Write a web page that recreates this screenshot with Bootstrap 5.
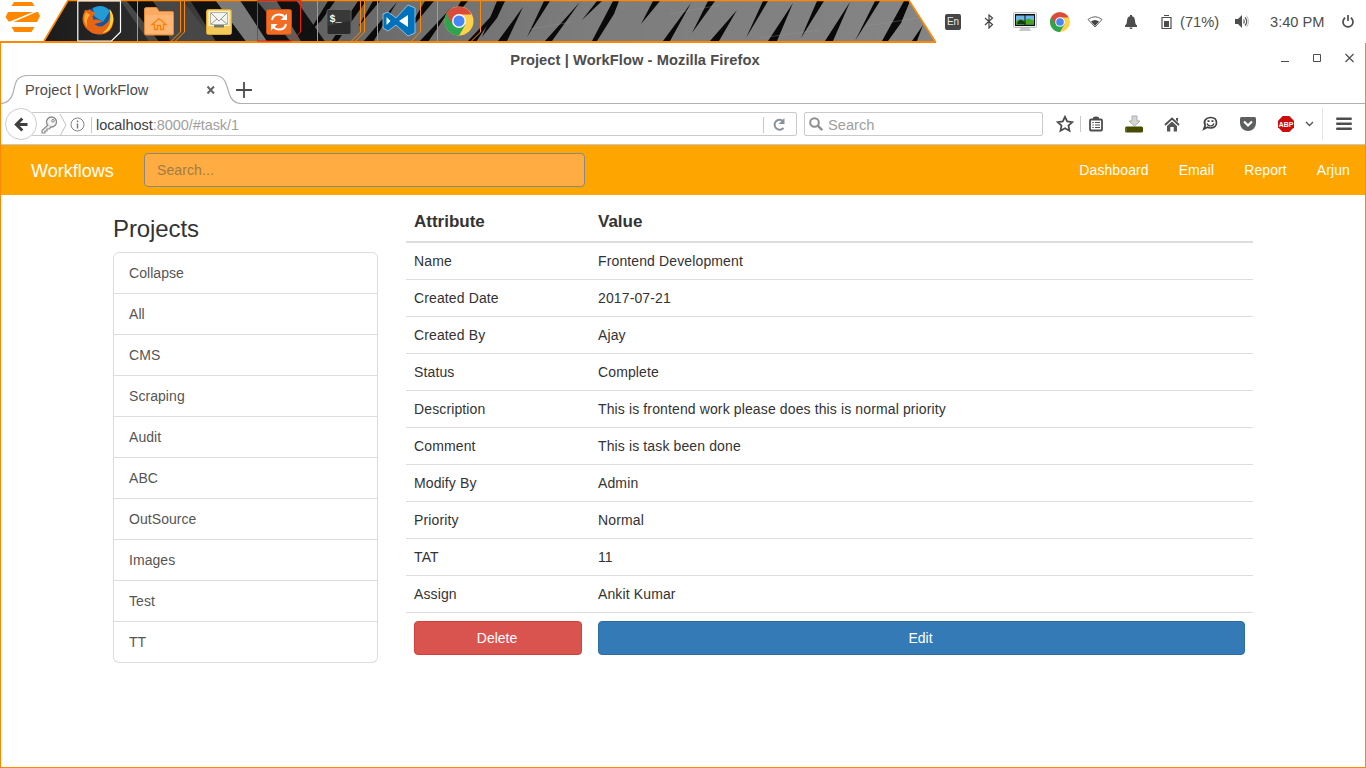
<!DOCTYPE html>
<html lang="en">
<head>
<meta charset="utf-8">
<meta name="viewport" content="width=device-width, initial-scale=1">
<title>Project | WorkFlow</title>
<link rel="stylesheet" href="https://cdn.jsdelivr.net/npm/bootstrap@5.3.0/dist/css/bootstrap.min.css">
<style>
html,body{height:768px;overflow:hidden}
body{font-family:"Liberation Sans",Arial,sans-serif;font-size:14px;line-height:20px;color:#333;background:#fff}
svg{display:block;flex:none}
/* desktop panel */
.panel{height:43px}
.panel-bg{position:absolute;left:0;top:0;z-index:-1}
.logo-box{width:77px}
.task-btn{width:60px;height:43px}
.tray{width:431px;height:43px;padding-right:4px;font-size:14.67px;color:#4d4d4d}
.tray-item{width:36px;display:flex;justify-content:center}
.tray-item.slim{width:34px}
.tray-batt{width:75px;padding-left:12px}
.tray-clock{width:74px;padding-left:10px}
.tray-power{width:28px;display:flex;justify-content:center}
.kbd-lang{width:16px;height:16px;background:#464646;color:#e8e8e8;font-size:10px;line-height:16px;border-radius:2px;text-align:center}
/* browser window */
.window-frame{height:725px;border:solid #ff8800;border-width:0 1px 1px}
.title-row{height:32px}
.title-text{width:1268px;font-size:14.67px;letter-spacing:.08px;color:#4d4d4d;padding-top:1px}
.tab-row{height:29px}
.tab-box{width:240px}
.tab-shape{position:absolute;left:0;top:0;z-index:-1}
.tab-title{font-size:14.67px;letter-spacing:.06px;color:#4c4c4c;padding-left:24px;width:203px}
.tab-rest{border-bottom:1px solid #aeb0b3}
.tool-row{height:41px;border-bottom:1px solid #c8c8c8;padding-left:4px}
.back-btn{width:32px;height:32px;border:1px solid #ccc;border-radius:50%;background:#fff;z-index:1;margin-right:-6px}
.field-box{height:24px;border:1px solid #cacaca;border-radius:2px;background:#fff;font-size:14.67px;color:#a0a0a0}
.url-box{width:766px;font-size:14.5px;letter-spacing:-.06px;padding:1px 0 0 8px}
.url-host{color:#404040}
.v-line{width:1px;height:16px;background:#c9c9c9;flex:none}
.find-box{width:239px;margin-left:7px;padding:1px 0 0 4px}
.tb-icon{width:38px;display:flex;justify-content:center;flex:none}
.tb-sm{width:30px}
/* page */
.app-nav{height:50px;background:#ffa500;padding:0 15px 0 30px}
.app-nav a{color:#fff;text-decoration:none}
.brand-link{font-size:18px;width:113px;padding-top:2px}
.app-search{width:441px;height:34px;border:1px solid #888;border-radius:4px;background:#ffac42;color:#8d6c43;font-size:14px;letter-spacing:.1px;padding:6px 12px}
.app-search::placeholder{color:#a37b45;opacity:1}
.app-search:focus{background:#ffac42}
.menu-links{gap:30px;letter-spacing:.1px}
.page-body{padding:0 0 0 112px}
.side-col{width:265px;margin-right:28px}
.side-title{font-size:24px;line-height:26px;letter-spacing:-.1px;margin:21px 0 10px;color:#333}
.list-group-item{border-color:#ddd;padding:10px 15px;color:#555;letter-spacing:.06px}
.detail-table{width:847px;margin:6px 0 0;table-layout:fixed;border-collapse:separate;border-spacing:0;color:#333}
.detail-table>:not(caption)>*>*{padding:8px;border-bottom:1px solid #ddd;color:#333;letter-spacing:.125px}
.detail-table>thead>tr>th{font-size:17px;line-height:24px;padding:9px 8px 7px;border-bottom:2px solid #ddd;letter-spacing:0}
.detail-table>tbody>tr:last-child>td{border-bottom:0}
.detail-table .btn{font-size:14px;line-height:20px;padding:6px 13px 6px 11px;border-radius:4px;color:#fff}
.btn-del{background:#d9534f;border-color:#d43f3a}
.btn-ed{background:#337ab7;border-color:#2e6da4}
</style>
</head>
<body>
<header class="panel d-flex position-relative">
<svg class="panel-bg" width="936" height="43" viewBox="0 0 936 43">
<defs>
<linearGradient id="wall" gradientUnits="userSpaceOnUse" x1="44" x2="936" y1="0" y2="0"><stop offset="0" stop-color="#1b1b1b"/><stop offset=".14" stop-color="#303030"/><stop offset=".25" stop-color="#5a5a5a"/><stop offset=".4" stop-color="#6e6e6e"/><stop offset=".6" stop-color="#7c7c7c"/><stop offset="1" stop-color="#858585"/></linearGradient>
<clipPath id="barclip"><path d="M68 0H909L935 42H44Z"/></clipPath>
</defs>
<g clip-path="url(#barclip)">
<rect width="936" height="43" fill="url(#wall)"/>
<path d="M120 0h10l34 43h-14zM150 0h32l34 43h-50z" fill="#474747"/>
<path d="M215 0h24l36 43h-28z" fill="#7a7a7a"/>
<path d="M126 0h26l14 20 4 23h-10zM190 0h25l32 43h-30zM240 0h16l36 43h-24zM276 0h20l30 43h-24z" fill="#111"/>
<g fill="#0a0a0a">
<path d="M328 1h7l-14 20-12 11zM358 1h8l-17 24-12 17h-6zM397 2l-24 40h-10zM380 1h-7l-15 26zM425 1h9l-20 24-8 8zM451 8l-23 34h-9zM468 1h-7l-16 27zM498 9l-22 33h-9z"/>
<path d="M497 1h8l-8 17-15 19zM523 7l-16 34h-9zM550 1h-6l-17 36zM580 2l-28 39h-7zM602 1h-5l-15 19zM619 1h-6l-21 40h5l17-27zM660 1h-7l-12 23zM691 3l-21 38h-7zM715 1h-7l-16 32zM737 10l-18 31h-9zM768 1h-5l-17 37zM793 3l-16 38h-9zM824 1h-7l-16 37zM850 2l-17 39h-8zM880 1h-5l-20 40zM910 1h-6l-22 40h6l13-18zM923 25l-6 16h-5z"/>
</g>
<path d="M530 29l42-7M670 14l50-9M760 38l60-8M865 26l60-9" stroke="#999" stroke-width="1" opacity=".35"/>
</g>
<path d="M44 41L68 .5H909L935 41" fill="none" stroke="#ff8800" stroke-width="1.6"/>
<path d="M0 42H1366" stroke="#ff8800" stroke-width="2"/>
</svg>
<div class="logo-box"><svg width="44" height="34" viewBox="0 0 44 34"><g fill="#ff8800"><path d="M14 2h18l2.500 4h-23zM8 12h25L10 21.500H8.500L5.500 17zM36.500 12h1.500l2 4-3 6H13.500zM11.500 27h23l-3 5h-17z"/></g></svg></div>
<div class="task-btn"><svg width="60" height="43" viewBox="0 0 60 43"><path d="M.8.8h42.7V32l-9 9H.8z" fill="none" stroke="#fff" stroke-width="1.200"/><circle cx="22" cy="20.500" r="14" fill="#17559d"/><path d="M16 8q10-5 17 3l-7 11-9-6z" fill="#239bd5"/><path d="M8 10q-5 10 0 17 6 8 16 7.500Q36 33 36.500 20q0-7-4-11 2 12-4 15-5 5-11 0l8-2q-5-4-9-2l-1-4 4-3q-5-1-7-4-1 2-4 1z" fill="#e76513"/><path d="M32.500 9q5 6 3.500 13-2 10-11 11 7-4 8-11 1-6-.5-13z" fill="#ffd13b"/><path d="M9 12q-4 8 1 15-1-9 3-12z" fill="#ffad30"/></svg></div>
<div class="task-btn"><svg width="60" height="43" viewBox="0 0 60 43"><path d="M.5 1v40M43.500 1v31l-9 9M47.500 1v31l-9 9" fill="none" stroke="#ff8800"/><path d="M7.500 9q0-1.500 2-1.500h10l3 4h13q1 0 1 1.500V34q0 1-1.500 1h-26q-1.500 0-1.500-1.500z" fill="#fbaa63" stroke="#e8862e"/><path d="M8 15h28v19H8z" fill="#ffb574"/><path d="M15 24.500l7-6 7 6h-2.500v5h-3v-4h-3v4h-3v-5z" fill="none" stroke="#f5820a" stroke-width="1.300"/></svg></div>
<div class="task-btn"><svg width="60" height="43" viewBox="0 0 60 43"><rect x="9.500" y="9.500" width="25" height="25" rx="2" fill="#f5cf60" stroke="#dda32b"/><rect x="11.500" y="11" width="21" height="15" fill="#fff4c9"/><path d="M13.500 12.500h17v12h-17z" fill="#f4f4ee" stroke="#b4b4a6"/><path d="M14 13l8 8 8-8M14 24l6-5M30 24l-6-5" fill="none" stroke="#999"/><path d="M10 26h6v2h12v-2h6v8H10z" fill="#f3c957"/><path d="M17 25h10v2.500H17z" fill="#777"/></svg></div>
<div class="task-btn"><svg width="60" height="43" viewBox="0 0 60 43"><path d="M.5.500h43V32l-9 9H.5z" fill="none" stroke="#f2200a"/><rect x="9.500" y="9.500" width="25" height="25" rx="2" fill="#f36c24" stroke="#c94d12"/><path d="M15 20q1-5.500 7-5.500 4 0 6 3M29 24q-1 5.500-7 5.500-4 0-6-3" fill="none" stroke="#fff" stroke-width="2"/><path d="M30 13.500v6.500h-6.500zM14 30.500V24h6.500z" fill="#fff"/></svg></div>
<div class="task-btn"><svg width="60" height="43" viewBox="0 0 60 43"><path d="M.5 1v40M43.500 1v31l-9 9M47.500 1v31l-9 9" fill="none" stroke="#ff8800"/><rect x="10" y="9.500" width="24" height="25" rx="2" fill="#2b2b2b" stroke="#666"/><path d="M11 10h22v11l-22 5z" fill="#393939"/><text x="12.500" y="22" font-family="Liberation Mono" font-weight="700" font-size="10" fill="#fff">$_</text></svg></div>
<div class="task-btn"><svg width="60" height="43" viewBox="0 0 60 43"><path d="M.5 1v40M43.500 1v31l-9 9" fill="none" stroke="#ff8800"/><path d="M31 5l7 3v25l-7 3-12-11-8 6-5-3V14l5-2 8 6z" fill="#0071ba" stroke="#a8d0eb" stroke-width=".8"/><path d="M31 15v12l-9-6zM9.500 17v8l4-4z" fill="#fff"/></svg></div>
<div class="task-btn"><svg width="60" height="43" viewBox="0 0 60 43"><path d="M.5 1v40M43.500 1v31l-9 9" fill="none" stroke="#ff8800"/><g id="chromeicon"><circle cx="22" cy="21" r="14.500" fill="#fed14b"/><path d="M22 21L9.440 13.750A14.500 14.500 0 0 0 22 35.500L28.500 24.500z" fill="#2da44e"/><path d="M9.440 13.750A14.500 14.500 0 0 1 34.560 14.500H22L15 24z" fill="#d94b3d"/><circle cx="22" cy="21" r="7" fill="#f5f5f5"/><circle cx="22" cy="21" r="5.500" fill="#4587f5"/></g></svg></div>
<div class="tray d-flex align-items-center ms-auto">
<div class="tray-item"><div class="kbd-lang">En</div></div>
<div class="tray-item"><svg width="10" height="15" viewBox="0 0 10 15"><path d="M1 4l7.500 6.500L5 14V1l3.500 3L1 11" fill="none" stroke="#444" stroke-width="1.200"/></svg></div>
<div class="tray-item"><svg width="24" height="20" viewBox="0 0 24 20"><path d="M8 15h8l2 4H6z" fill="#c8c8c8"/><rect x=".5" y=".5" width="23" height="15" rx="1" fill="#eee" stroke="#bbb"/><path d="M2 2h20v12H2z" fill="#111"/><path d="M3 3.500h18v9H3z" fill="#6db7ee"/><path d="M3 9l4-2 5 1.500 3-2 6 2v4H3z" fill="#47a522"/><path d="M4 12q1-4 4-4t4 4z" fill="#123f0c"/><path d="M12 3v10" stroke="#111"/></svg></div>
<div class="tray-item slim"><svg width="20" height="20" viewBox="7.500 6.500 29 29"><use href="#chromeicon"/></svg></div>
<div class="tray-item"><svg width="16" height="12" viewBox="0 0 16 12"><path d="M1 3.500Q8-2 15 3.500L8 11z" fill="none" stroke="#666" stroke-width="1"/><path d="M4 5.500Q8 2.500 12 5.500L8 10z" fill="#444"/></svg></div>
<div class="tray-item"><svg width="12" height="14" viewBox="0 0 12 14"><path d="M5 0h2v1.200q3 .8 3 4.800 0 3 2 4.500V12H0v-1.500Q2 9 2 6q0-4 3-4.800zM4.500 12.500h3q0 1.500-1.500 1.500t-1.500-1.500z" fill="#4d4d4d"/></svg></div>
<div class="tray-batt d-flex align-items-center"><svg width="11" height="14" viewBox="0 0 11 14"><path d="M3 .5h5M1 2.500h9v11H1z" fill="none" stroke="#4d4d4d" stroke-width="1.200"/><path d="M3 6h5v6H3z" fill="#4d4d4d"/></svg><span class="ps-2">(71%)</span></div>
<div class="tray-item"><svg width="14" height="13" viewBox="0 0 14 13"><path d="M0 4h3l4-4v13L3 9H0z" fill="#4d4d4d"/><path d="M8.500 4.500q1.500 2 0 4M10 2.500q3.500 4 0 8" fill="none" stroke="#555" stroke-width="1.200"/><path d="M11.500 .8q4 5.700 0 11.400" fill="none" stroke="#bbb"/></svg></div>
<div class="tray-clock">3:40 PM</div>
<div class="tray-power"><svg width="12" height="13" viewBox="0 0 12 13"><path d="M3.200 2.800a5 5 0 1 0 5.600 0M6 0v6" fill="none" stroke="#4d4d4d" stroke-width="1.700"/></svg></div>
</div>
</header>
<section class="window-frame">
<div class="title-row d-flex">
<div class="title-text text-center fw-bold d-flex align-items-center justify-content-center">Project | WorkFlow - Mozilla Firefox</div>
<svg class="ms-auto" width="84" height="30" viewBox="0 0 84 30"><g fill="none" stroke="#4d4d4d"><path d="M0 18.500h8M32.500 11.500h7v7h-7z"/><path d="M64.500 11l8 8M72.500 11l-8 8" stroke-width="1.200"/></g></svg>
</div>
<div class="tab-row d-flex">
<div class="tab-box d-flex align-items-center position-relative">
<svg class="tab-shape" width="240" height="29" viewBox="0 0 240 29"><path d="M0 28.500Q9 28 12 18L14 10Q16 .5 27 .5H213Q223 .5 225.500 10L228 18Q231 28.500 240 28.500" fill="none" stroke="#aeb0b3" stroke-width="1.200"/></svg>
<div class="tab-title">Project | WorkFlow</div>
<svg width="14" height="10" viewBox="0 0 14 10"><path d="M3.500 1.500l6.500 7M10 1.500l-6.500 7" stroke="#666" stroke-width="2"/></svg>
</div>
<div class="tab-rest flex-grow-1"><svg width="20" height="28" viewBox="5 0 20 28" style="margin-left:-5px"><path d="M5 15h16M13 7v16" stroke="#4d4d4d" stroke-width="1.800"/></svg></div>
</div>
<div class="tool-row d-flex align-items-center">
<div class="back-btn d-flex align-items-center justify-content-center"><svg width="14" height="15" viewBox="0 0 14 15"><path d="M13.500 7.500H3M8.300 1.500l-6 6 6 6" fill="none" stroke="#404040" stroke-width="3"/></svg></div>
<div class="field-box url-box d-flex align-items-center">
<svg width="18" height="18" viewBox="0 0 18 18"><circle cx="11.500" cy="6" r="5" fill="#f4f4f4" stroke="#888" stroke-width="1.300"/><circle cx="13" cy="4.800" r="1.300" fill="none" stroke="#888"/><path d="M8 9l-6 5.500V17h3v-2h2v-2h2l2-2" fill="#f0f0f0" stroke="#888" stroke-width="1.100"/></svg>
<svg width="9" height="22" viewBox="0 0 9 22"><path d="M2 0l6 11-6 11" fill="none" stroke="#c0c0c0"/></svg>
<svg width="15" height="15" viewBox="0 0 15 15" style="margin-left:3px"><circle cx="7.500" cy="7.500" r="6.500" fill="none" stroke="#858585"/><path d="M7.500 6.500v5M7.500 3.500v1.700" stroke="#777" stroke-width="1.400"/></svg>
<span class="v-line" style="margin:0 4px 0 6px"></span>
<span><span class="url-host">localhost</span>:8000/#task/1</span>
<span class="v-line ms-auto"></span>
<svg width="32" height="14" viewBox="0 0 32 14"><path d="M19.500 9.800a5 5 0 1 1-.5-6.800" fill="none" stroke="#88919c" stroke-width="2"/><path d="M20.500 0v6h-6z" fill="#88919c"/></svg>
</div>
<div class="field-box find-box d-flex align-items-center"><svg width="19" height="15" viewBox="0 0 19 15"><circle cx="5.500" cy="5.500" r="4.300" fill="none" stroke="#8e8e8e" stroke-width="2"/><path d="M8.700 8.700l4.500 4.500" stroke="#8e8e8e" stroke-width="2.400"/></svg><span>Search</span></div>
<div class="tb-icon tb-sm" style="margin-left:7px"><svg width="18" height="18" viewBox="0 0 18 18"><path d="M9 1.800l2.200 4.700 5.100.6-3.800 3.500 1 5.100L9 13.200l-4.500 2.500 1-5.100L1.700 7.100l5.100-.6z" fill="none" stroke="#4d4d4d" stroke-width="1.800"/></svg></div>
<span class="v-line"></span>
<div class="tb-icon tb-sm"><svg width="16" height="16" viewBox="0 0 16 16"><rect x="2" y="3.500" width="12" height="11" rx="1" fill="none" stroke="#4d4d4d" stroke-width="1.800"/><path d="M5 3V1.500Q6 .5 8 .5t3 1V3z" fill="#4d4d4d"/><path d="M4.300 6.500h1.500M7 6.500h5M4.300 9h1.500M7 9h5M4.300 11.500h1.500M7 11.500h5" stroke="#4d4d4d" stroke-width="1.200"/></svg></div>
<div class="tb-icon" style="margin-left:4px"><svg width="18" height="18" viewBox="0 0 18 18"><path d="M7 1h5v5h3l-5.500 5L4 6h3z" fill="#d4d8d5" stroke="#a9afaa"/><rect y="11.500" width="18" height="6" rx="1.500" fill="#454c00"/><path d="M1 12.500v4" stroke="#78904b"/></svg></div>
<div class="tb-icon"><svg width="16" height="15" viewBox="0 0 16 15"><path d="M1 8l7-6.500L15 8" fill="none" stroke="#4d4d4d" stroke-width="1.800"/><path d="M12 1h2v4l-2-2zM8 4.500l5 4.500v5.500H9.700V10H6.300v4.500H3V9z" fill="#555"/></svg></div>
<div class="tb-icon"><svg width="16" height="16" viewBox="0 0 16 16"><path d="M8.500 1.500c4 0 6 2.200 6 5.300s-2.500 5.200-6 5.200c-1.300 0-2.300-.3-3-.7L1.800 13l1.400-3.500C1 5 4 1.500 8.500 1.500z" fill="none" stroke="#404040" stroke-width="1.700"/><path d="M5 7.500q1 2.500 3.500 2.500T12 7.500" fill="none" stroke="#404040" stroke-width="1.200"/><path d="M5.500 4.200h2V6h-2zM9.500 4.200h2V6h-2z" fill="#404040"/></svg></div>
<div class="tb-icon"><svg width="16" height="14" viewBox="0 0 16 14"><path d="M1.500 0h13Q16 0 16 1.500V6a8 8 0 0 1-16 0V1.500Q0 0 1.500 0z" fill="#5d5e60"/><path d="M4 4.500l4 4 4-4" fill="none" stroke="#fff" stroke-width="2.200"/></svg></div>
<div class="tb-icon"><svg width="16" height="16" viewBox="0 0 16 16"><path d="M4.700 0h6.600L16 4.700v6.600L11.300 16H4.700L0 11.300V4.700z" fill="#cc0b0b"/><text x="8" y="10.700" text-anchor="middle" font-family="Liberation Sans" font-weight="700" font-size="7.500" fill="#fff" textLength="14.500" lengthAdjust="spacingAndGlyphs">ABP</text></svg></div>
<svg width="9" height="6" viewBox="0 0 9 6"><path d="M1 1l3.500 3.500L8 1" fill="none" stroke="#555" stroke-width="1.400"/></svg>
<span class="v-line" style="margin-left:8px;height:32px;background:#e6e6e6"></span>
<div class="tb-icon flex-grow-1"><svg width="16" height="14" viewBox="0 0 16 14"><path d="M1.300 1.800h13.400M1.300 6.800h13.400M1.300 11.800h13.400" stroke="#4d4d4d" stroke-width="2.600" stroke-linecap="round"/></svg></div>
</div>
<nav class="app-nav d-flex align-items-center">
<a class="brand-link" href="#">Workflows</a>
<input class="form-control app-search" type="text" placeholder="Search...">
<div class="menu-links d-flex ms-auto"><a href="#">Dashboard</a><a href="#">Email</a><a href="#">Report</a><a href="#">Arjun</a></div>
</nav>
<main class="page-body d-flex align-items-start">
<aside class="side-col">
<h3 class="side-title fw-normal">Projects</h3>
<div class="list-group">
<a class="list-group-item" href="#">Collapse</a><a class="list-group-item" href="#">All</a><a class="list-group-item" href="#">CMS</a><a class="list-group-item" href="#">Scraping</a><a class="list-group-item" href="#">Audit</a><a class="list-group-item" href="#">ABC</a><a class="list-group-item" href="#">OutSource</a><a class="list-group-item" href="#">Images</a><a class="list-group-item" href="#">Test</a><a class="list-group-item" href="#">TT</a>
</div>
</aside>
<table class="table detail-table">
<colgroup><col style="width:184px"><col></colgroup>
<thead><tr><th>Attribute</th><th>Value</th></tr></thead>
<tbody>
<tr><td>Name</td><td>Frontend Development</td></tr>
<tr><td>Created Date</td><td>2017-07-21</td></tr>
<tr><td>Created By</td><td>Ajay</td></tr>
<tr><td>Status</td><td>Complete</td></tr>
<tr><td>Description</td><td>This is frontend work please does this is normal priority</td></tr>
<tr><td>Comment</td><td>This is task been done</td></tr>
<tr><td>Modify By</td><td>Admin</td></tr>
<tr><td>Priority</td><td>Normal</td></tr>
<tr><td>TAT</td><td>11</td></tr>
<tr><td>Assign</td><td>Ankit Kumar</td></tr>
<tr><td><button class="btn btn-del d-block w-100">Delete</button></td><td><button class="btn btn-ed d-block w-100">Edit</button></td></tr>
</tbody>
</table>
</main>
</section>
<script src="https://cdn.jsdelivr.net/npm/bootstrap@5.3.0/dist/js/bootstrap.bundle.min.js"></script>
</body>
</html>
